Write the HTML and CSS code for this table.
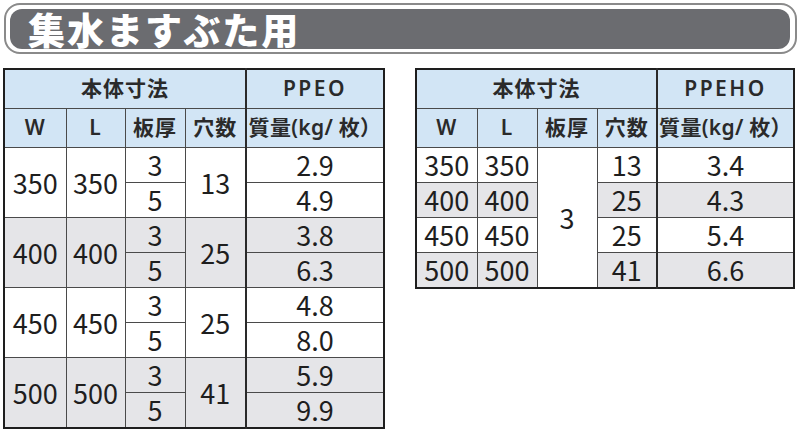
FILE: index.html
```html
<!DOCTYPE html>
<html lang="ja">
<head>
<meta charset="utf-8">
<link rel="stylesheet" href="styles.css">
</head>
<body>
<div class="banner"><div class="banner-inner"><h1 class="title">集水ますぶた用</h1></div></div>
<div class="tables">
  <table class="spec left">
    <colgroup><col class="c-w"><col class="c-l"><col class="c-t"><col class="c-h"><col class="c-m"></colgroup>
    <thead>
      <tr class="hr1"><th colspan="4">本体寸法</th><th class="mass">PPEO</th></tr>
      <tr class="hr2"><th>W</th><th>L</th><th>板厚</th><th>穴数</th><th class="mass">質量(kg/ 枚）</th></tr>
    </thead>
    <tbody>
      <tr><td rowspan="2">350</td><td rowspan="2">350</td><td>3</td><td rowspan="2">13</td><td class="mass">2.9</td></tr>
      <tr><td>5</td><td class="mass">4.9</td></tr>
    </tbody>
    <tbody class="gray">
      <tr><td rowspan="2">400</td><td rowspan="2">400</td><td>3</td><td rowspan="2">25</td><td class="mass">3.8</td></tr>
      <tr><td>5</td><td class="mass">6.3</td></tr>
    </tbody>
    <tbody>
      <tr><td rowspan="2">450</td><td rowspan="2">450</td><td>3</td><td rowspan="2">25</td><td class="mass">4.8</td></tr>
      <tr><td>5</td><td class="mass">8.0</td></tr>
    </tbody>
    <tbody class="gray">
      <tr><td rowspan="2">500</td><td rowspan="2">500</td><td>3</td><td rowspan="2">41</td><td class="mass">5.9</td></tr>
      <tr><td>5</td><td class="mass">9.9</td></tr>
    </tbody>
  </table>

  <table class="spec right">
    <colgroup><col class="c-w"><col class="c-l"><col class="c-t"><col class="c-h"><col class="c-m"></colgroup>
    <thead>
      <tr class="hr1"><th colspan="4">本体寸法</th><th class="mass">PPEHO</th></tr>
      <tr class="hr2"><th>W</th><th>L</th><th>板厚</th><th>穴数</th><th class="mass">質量(kg/ 枚）</th></tr>
    </thead>
    <tbody>
      <tr><td>350</td><td>350</td><td rowspan="4" class="white">3</td><td>13</td><td class="mass">3.4</td></tr>
      <tr class="grayrow"><td>400</td><td>400</td><td>25</td><td class="mass">4.3</td></tr>
      <tr><td>450</td><td>450</td><td>25</td><td class="mass">5.4</td></tr>
      <tr class="grayrow"><td>500</td><td>500</td><td>41</td><td class="mass">6.6</td></tr>
    </tbody>
  </table>
</div>
</body>
</html>
```

FILE: styles.css
```css
html, body {
  margin: 0;
  padding: 0;
  background: #ffffff;
}
body {
  width: 800px;
  height: 433px;
  overflow: hidden;
  font-family: "Noto Sans CJK JP", "Noto Sans", sans-serif;
  color: #222;
}
.banner {
  box-sizing: border-box;
  margin: 3px 3px 0 4px;
  width: 793px;
  height: 51px;
  border: 2px solid #8a8a8a;
  border-radius: 16px;
  padding: 4px 5px 3px 4px;
  background: #fff;
}
.banner-inner {
  height: 100%;
  background: #6b6c70;
  border-radius: 12px;
  display: flex;
  align-items: center;
  padding-left: 18px;
}
.title {
  margin: 0;
  color: #fff;
  font-size: 37px;
  font-weight: 900;
  letter-spacing: 2px;
  line-height: 1.1;
}
.tables {
  display: flex;
  align-items: flex-start;
  gap: 30px;
  margin-top: 14px;
  padding-left: 3px;
}
.spec {
  border-collapse: collapse;
  table-layout: fixed;
  border: 2px solid #1e1e1e;
}
.spec.left { width: 382px; }
.spec.right { width: 380px; }
.left .c-w { width: 62px; }
.left .c-l { width: 59px; }
.left .c-t { width: 60px; }
.left .c-h { width: 61px; }
.right .c-w { width: 61px; }
.right .c-l { width: 60px; }
.right .c-t { width: 60px; }
.right .c-h { width: 60px; }
.spec th, .spec td {
  border: 1px solid #4a4a4a;
  padding: 0;
  text-align: center;
  vertical-align: middle;
  white-space: nowrap;
}
.spec th {
  background: #d2e5f5;
  font-family: "Noto Sans", "Noto Sans CJK JP", sans-serif;
  font-size: 21px;
  font-weight: 600;
  line-height: 1.2;
  color: #2a2a2a;
  letter-spacing: 1px;
}
.spec .hr1 th { height: 38px; }
.spec .hr1 th.mass { letter-spacing: 2.5px; }
.spec .hr2 th { height: 38px; }
.spec .hr2 th.mass { letter-spacing: 0.3px; font-size: 21px; }
.spec td {
  font-size: 27px;
  font-weight: 400;
  line-height: 1.1;
  height: 34px;
  color: #1e1e1e;
}
.spec .mass {
  border-left: 2px solid #2a2a2a;
}
.spec .gray td { background: #e5e5e8; }
.spec .grayrow td { background: #e5e5e8; }
.spec td.white { background: #fff; }
```
